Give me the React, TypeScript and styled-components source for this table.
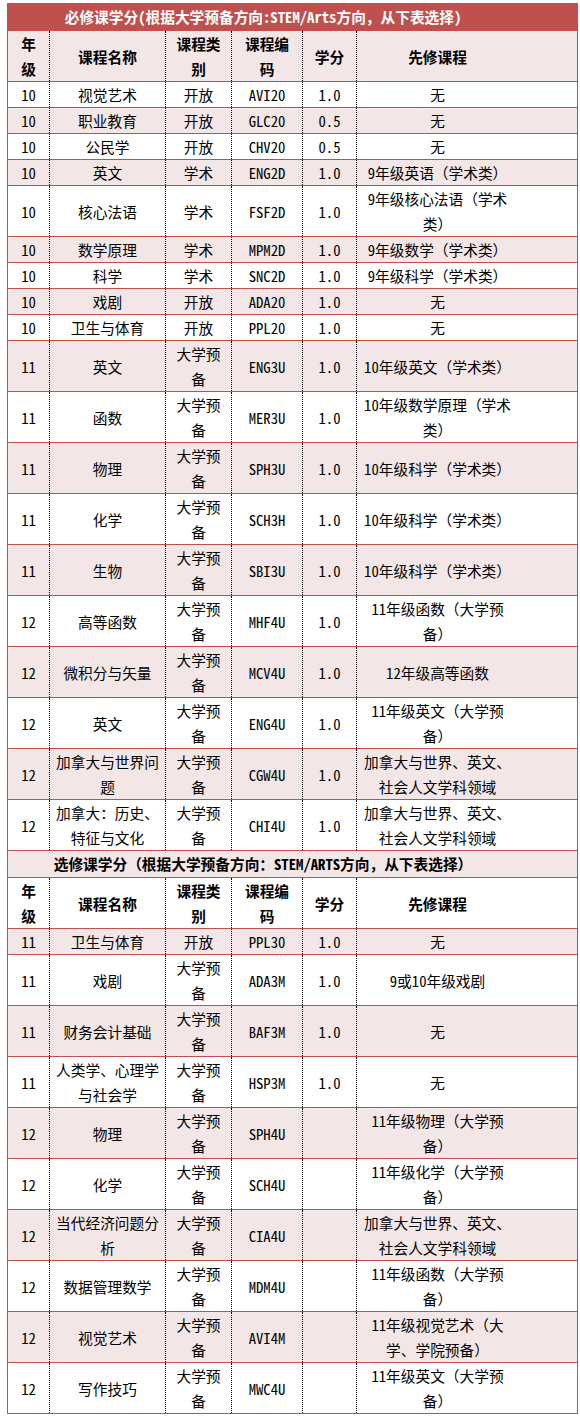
import React from 'react'
import styled, { createGlobalStyle } from 'styled-components'

const RED = '#C0504D'
const PINK = '#F2E6E6'

const GlobalStyle = createGlobalStyle`
  body {
    margin: 0;
    background: #fff;
  }
`

const Page = styled.div`
  padding: 3px 0 6px 7px;
`

const Table = styled.table`
  border-collapse: collapse;
  table-layout: fixed;
  width: 570px;
  font-family: 'Noto Sans Mono CJK SC', 'Noto Sans CJK SC', sans-serif;
  font-size: 14.7px;
  line-height: 25px;
  color: #000;
`

const Row = styled.tr<{ $shade: boolean }>`
  background: ${({ $shade }) => ($shade ? PINK : '#fff')};
`

const Cell = styled.td<{ $head?: boolean; $last?: boolean }>`
  padding: 0 ${({ $last }) => ($last ? '59px' : '0')} 0 0;
  text-align: center;
  vertical-align: middle;
  white-space: pre-line;
  font-weight: ${({ $head }) => ($head ? 700 : 400)};
  border-top: 1px solid ${RED};
  border-bottom: 1px solid ${RED};
  border-left: 1px dotted #000;
  border-right: 1px dotted #000;
  &:first-child {
    border-left: 1px solid ${RED};
  }
  &:last-child {
    border-right: 1px solid ${RED};
  }
`

const TitleCell = styled.td<{ $main?: boolean }>`
  padding: 0 59px 1px 0;
  text-align: center;
  font-weight: 700;
  color: ${({ $main }) => ($main ? '#fff' : '#000')};
  background: ${({ $main }) => ($main ? RED : PINK)};
  border: 1px solid ${RED};
`

const widths = [42, 116, 66, 71, 54, 221]
const header = ['年\n级', '课程名称', '课程类\n别', '课程编\n码', '学分', '先修课程']

type Course = [string, string, string, string, string, string]

const PREP = '大学预\n备'
const CANADA = '加拿大与世界、英文、\n社会人文学科领域'

const required: Course[] = [
  ['10', '视觉艺术', '开放', 'AVI20', '1.0', '无'],
  ['10', '职业教育', '开放', 'GLC20', '0.5', '无'],
  ['10', '公民学', '开放', 'CHV20', '0.5', '无'],
  ['10', '英文', '学术', 'ENG2D', '1.0', '9年级英语（学术类）'],
  ['10', '核心法语', '学术', 'FSF2D', '1.0', '9年级核心法语（学术\n类）'],
  ['10', '数学原理', '学术', 'MPM2D', '1.0', '9年级数学（学术类）'],
  ['10', '科学', '学术', 'SNC2D', '1.0', '9年级科学（学术类）'],
  ['10', '戏剧', '开放', 'ADA20', '1.0', '无'],
  ['10', '卫生与体育', '开放', 'PPL20', '1.0', '无'],
  ['11', '英文', PREP, 'ENG3U', '1.0', '10年级英文（学术类）'],
  ['11', '函数', PREP, 'MER3U', '1.0', '10年级数学原理（学术\n类）'],
  ['11', '物理', PREP, 'SPH3U', '1.0', '10年级科学（学术类）'],
  ['11', '化学', PREP, 'SCH3H', '1.0', '10年级科学（学术类）'],
  ['11', '生物', PREP, 'SBI3U', '1.0', '10年级科学（学术类）'],
  ['12', '高等函数', PREP, 'MHF4U', '1.0', '11年级函数（大学预\n备）'],
  ['12', '微积分与矢量', PREP, 'MCV4U', '1.0', '12年级高等函数'],
  ['12', '英文', PREP, 'ENG4U', '1.0', '11年级英文（大学预\n备）'],
  ['12', '加拿大与世界问\n题', PREP, 'CGW4U', '1.0', CANADA],
  ['12', '加拿大：历史、\n特征与文化', PREP, 'CHI4U', '1.0', CANADA],
]

const elective: Course[] = [
  ['11', '卫生与体育', '开放', 'PPL30', '1.0', '无'],
  ['11', '戏剧', PREP, 'ADA3M', '1.0', '9或10年级戏剧'],
  ['11', '财务会计基础', PREP, 'BAF3M', '1.0', '无'],
  ['11', '人类学、心理学\n与社会学', PREP, 'HSP3M', '1.0', '无'],
  ['12', '物理', PREP, 'SPH4U', '', '11年级物理（大学预\n备）'],
  ['12', '化学', PREP, 'SCH4U', '', '11年级化学（大学预\n备）'],
  ['12', '当代经济问题分\n析', PREP, 'CIA4U', '', CANADA],
  ['12', '数据管理数学', PREP, 'MDM4U', '', '11年级函数（大学预\n备）'],
  ['12', '视觉艺术', PREP, 'AVI4M', '', '11年级视觉艺术（大\n学、学院预备）'],
  ['12', '写作技巧', PREP, 'MWC4U', '', '11年级英文（大学预\n备）'],
]

function CourseRow({ cells, shade, head }: { cells: string[]; shade: boolean; head?: boolean }) {
  return (
    <Row $shade={shade}>
      {cells.map((text, i) => (
        <Cell key={i} $head={head} $last={i === cells.length - 1}>
          {text}
        </Cell>
      ))}
    </Row>
  )
}

export default function App() {
  // stripes run through both sections, starting pink on the first header
  const secondStart = required.length + 1
  return (
    <Page>
      <GlobalStyle />
      <Table>
        <colgroup>
          {widths.map((w, i) => (
            <col key={i} style={{ width: w }} />
          ))}
        </colgroup>
        <tbody>
          <tr>
            <TitleCell colSpan={6} $main>
              必修课学分(根据大学预备方向:STEM/Arts方向，从下表选择)
            </TitleCell>
          </tr>
          <CourseRow cells={header} shade head />
          {required.map((c, i) => (
            <CourseRow key={c[3]} cells={c} shade={(i + 1) % 2 === 0} />
          ))}
          <tr>
            <TitleCell colSpan={6}>选修课学分（根据大学预备方向：STEM/ARTS方向，从下表选择）</TitleCell>
          </tr>
          <CourseRow cells={header} shade={(secondStart + 1) % 2 === 0} head />
          {elective.map((c, i) => (
            <CourseRow key={c[3]} cells={c} shade={(secondStart + 2 + i) % 2 === 0} />
          ))}
        </tbody>
      </Table>
    </Page>
  )
}
